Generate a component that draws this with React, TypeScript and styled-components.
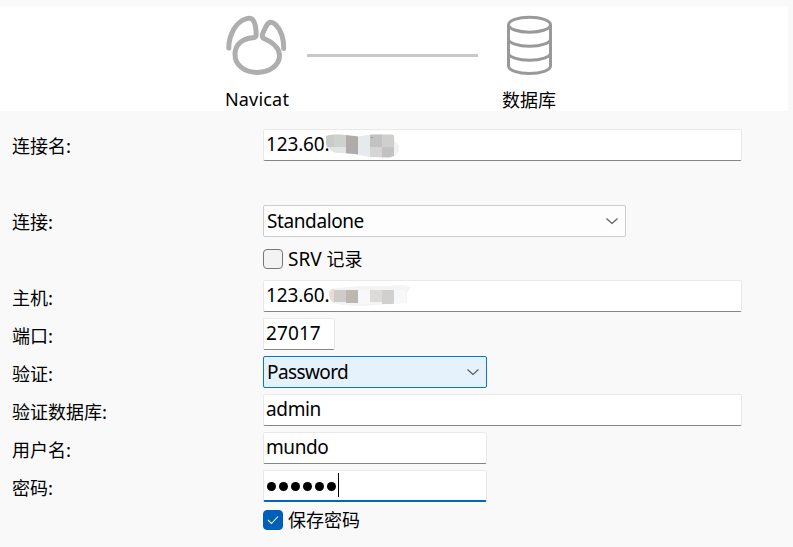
import React from "react";
import styled, { createGlobalStyle } from "styled-components";

const GlobalStyle = createGlobalStyle`
  * { box-sizing: border-box; }
  body {
    margin: 0;
    background: #f9f9f9;
    color: #000;
    font-family: "Noto Sans", "Noto Sans CJK SC", sans-serif;
    font-size: 19px;
  }
`;

const Window = styled.main`
  height: 547px;
  padding-top: 6px;
  overflow: hidden;
`;

const Header = styled.header`
  display: flex;
  width: 788px;
  height: 105px;
  padding: 9px 0 0 217px;
  background: #fff;
`;

const Endpoint = styled.div`
  display: flex;
  flex-direction: column;
  align-items: center;
  width: 80px;
`;

const Logo = styled.svg`
  flex: none;
  width: 80px;
  height: 60px;
`;

const Wire = styled.div`
  width: 171px;
  height: 3px;
  margin: 39px 11px 0 10px;
  background: #c8c8c8;
`;

const Caption = styled.span<{ $cjk?: boolean }>`
  margin-top: 11px;
  font-family: ${(p) => (p.$cjk ? '"Noto Sans CJK SC"' : '"Noto Sans"')}, sans-serif;
  font-size: 18px;
  line-height: 26px;
  letter-spacing: ${(p) => (p.$cjk ? 0 : 0.2)}px;
`;

const Form = styled.form`
  padding: 18px 0 0 12px;
`;

const Row = styled.div<{ $height?: number }>`
  display: flex;
  align-items: flex-start;
  height: ${(p) => p.$height ?? 38}px;
`;

const Label = styled.label<{ $line?: number }>`
  width: 251px;
  flex: none;
  font-family: "Noto Sans CJK SC", sans-serif;
  font-size: 18px;
  line-height: ${(p) => p.$line ?? 34}px;
`;

const Field = styled.div<{ $width: number; $focused?: boolean }>`
  display: flex;
  align-items: center;
  width: ${(p) => p.$width}px;
  height: 32px;
  padding: 0 2px 2px;
  background: #fff;
  border: 1px solid #e9e9e9;
  border-bottom: ${(p) => (p.$focused ? "2px solid #0067c0" : "1px solid #868686")};
  border-radius: 2px;
  line-height: 28px;
`;

const Text = styled.span<{ $spacing?: number }>`
  letter-spacing: ${(p) => p.$spacing ?? 0}px;
  white-space: nowrap;
`;

const Select = styled.div<{ $width: number; $active?: boolean }>`
  display: flex;
  align-items: center;
  justify-content: space-between;
  width: ${(p) => p.$width}px;
  height: 32px;
  padding: 0 7px 0 3px;
  background: ${(p) => (p.$active ? "#e5f1fb" : "#fdfdfd")};
  border: 1px solid ${(p) => (p.$active ? "#0078d4" : "#cdcdcd")};
  border-radius: 2px;
  line-height: 28px;
`;

const Option = styled.div<{ $top: number }>`
  display: flex;
  align-items: center;
  gap: 5px;
  height: 20px;
  margin: ${(p) => p.$top}px 0 0 251px;
  font-size: 18px;
  line-height: 20px;
`;

const Latin = styled.span`
  font-size: 19px;
`;

const Box = styled.span<{ $checked?: boolean }>`
  display: grid;
  place-items: center;
  width: 20px;
  height: 20px;
  border: 1px solid ${(p) => (p.$checked ? "#005fb8" : "#767676")};
  border-radius: 4px;
  background: ${(p) => (p.$checked ? "#005fb8" : "#f3f3f3")};
`;

const Dots = styled.div`
  display: flex;
  gap: 3px;
  padding: 3px 0 0 1px;
`;

const Dot = styled.i`
  width: 9px;
  height: 9px;
  border-radius: 50%;
  background: #000;
`;

const Caret = styled.i`
  width: 1px;
  height: 24px;
  margin: 0 0 0 2px;
  background: #000;
`;

const Redaction = styled.svg<{ $shift: number; $top?: number }>`
  flex: none;
  margin: ${(p) => p.$top ?? 2}px 0 0 ${(p) => p.$shift}px;
`;

function NavicatLogo() {
  return (
    <Logo viewBox="217 15 80 60" fill="none" stroke="#aeaeae" strokeWidth="5" strokeLinecap="round" strokeLinejoin="round">
      <path d="M228.800 48C228.800 35 235.500 22.500 245.500 19C252.500 16.700 255.700 20 256.200 34Q256.400 37.500 253 37.700C241 38.500 235 45.500 235 54.500C235 65 244.500 72.400 257 72.400C270 72.400 279.500 65 279.500 55.500C279.500 48 272 42 264.500 38.800Q261.600 37.500 262.500 34L266 26.500Q270 18.700 276 25C281.800 31 283.700 39 283.700 48.500" />
    </Logo>
  );
}

function DatabaseLogo() {
  return (
    <Logo viewBox="489 15 80 60" fill="none" stroke="#999" strokeWidth="3">
      <ellipse cx="529.5" cy="24.700" rx="21" ry="7.500" />
      <path d="M508.500 25V66C508.500 70.200 518 73.500 529.500 73.500S550.500 70.200 550.500 66V25M508.500 39C508.500 43 518 46.300 529.500 46.300S550.500 43 550.500 39M508.500 53C508.500 57 518 60.300 529.500 60.300S550.500 57 550.500 53" />
    </Logo>
  );
}

function Chevron() {
  return (
    <svg width="12" height="8" viewBox="0 0 12 8" fill="none" stroke="#5c5c5c" strokeWidth="1.2">
      <path d="M.5 1.500L6 6.500L11.500 1.500" />
    </svg>
  );
}

function NameRedaction() {
  return (
    <Redaction $shift={-3} $top={4} width="76" height="26" viewBox="326 133 76 26">
      <defs>
        <clipPath id="nameShape">
          <path d="M326 136Q329 134 340 134.500L359 136.500L372 134.500H392Q395 135 395 141Q400 145 399 151Q397 156 389 157.500L370 157L355 154L335 152.500Q326 149 326 143Z" />
        </clipPath>
      </defs>
      <g clipPath="url(#nameShape)" shapeRendering="crispEdges">
        <path fill="#f2f2f2" d="M326 133h76v26h-76z" />
        <path fill="#c9cbcb" d="M326 133h8v14h-8z" />
        <path fill="#cdd2ce" d="M334 133h12v14h-12z" />
        <path fill="#e4e4e4" d="M326 147h20v12h-20z" />
        <path fill="#b0aaa8" d="M346 133h12v14h-12z" />
        <path fill="#adabad" d="M346 147h12v12h-12z" />
        <path fill="#e5eaed" d="M358 133h12v26h-12z" />
        <path fill="#c2c2c3" d="M370 133h12v14h-12zM382 147h12v12h-12z" />
        <path fill="#cfcfce" d="M382 133h12v14h-12z" />
        <path fill="#d5d5d5" d="M370 147h12v12h-12z" />
      </g>
      <path fill="#dc8b46" d="M371 137h2v1h-2z" />
    </Redaction>
  );
}

function HostRedaction() {
  return (
    <Redaction $shift={-1} width="84" height="24" viewBox="328 284 84 24">
      <defs>
        <clipPath id="hostShape">
          <path d="M329 293Q330 288 338 288L359 286L389 286Q404 284 411 287Q409 290 407 293V303L390 304L362 306Q343 306 334 303Q329 300 329 293Z" />
        </clipPath>
      </defs>
      <g clipPath="url(#hostShape)" shapeRendering="crispEdges">
        <path fill="#f4f4f4" d="M328 284h84v24h-84z" />
        <path fill="#e7ddd3" d="M328 284h6v20h-6z" />
        <path fill="#cdccca" d="M334 290h12v12h-12z" />
        <path fill="#bdb7b0" d="M346 290h12v13h-12z" />
        <path fill="#f6f8fa" d="M358 290h12v14h-12zM394 290h12v14h-12z" />
        <path fill="#dcdbd9" d="M370 290h12v12h-12z" />
        <path fill="#d1d0cf" d="M382 290h12v14h-12z" />
      </g>
    </Redaction>
  );
}

export default function App() {
  return (
    <>
      <GlobalStyle />
      <Window>
        <Header>
          <Endpoint>
            <NavicatLogo />
            <Caption>Navicat</Caption>
          </Endpoint>
          <Wire />
          <Endpoint>
            <DatabaseLogo />
            <Caption $cjk>数据库</Caption>
          </Endpoint>
        </Header>
        <Form>
          <Row $height={76}>
            <Label $line={32}>连接名:</Label>
            <Field $width={479}>
              <Text $spacing={-0.15}>123.60.</Text>
              <NameRedaction />
            </Field>
          </Row>
          <Row>
            <Label $line={32}>连接:</Label>
            <Select $width={363}>
              <Text $spacing={-0.4}>Standalone</Text>
              <Chevron />
            </Select>
          </Row>
          <Row $height={37}>
            <Option $top={6}>
              <Box />
              <Text>
                <Latin>SRV </Latin>记录
              </Text>
            </Option>
          </Row>
          <Row>
            <Label>主机:</Label>
            <Field $width={479}>
              <Text $spacing={-0.15}>123.60.</Text>
              <HostRedaction />
            </Field>
          </Row>
          <Row>
            <Label>端口:</Label>
            <Field $width={72}>
              <Text $spacing={0.1}>27017</Text>
            </Field>
          </Row>
          <Row>
            <Label>验证:</Label>
            <Select $width={224} $active>
              <Text $spacing={-0.6}>Password</Text>
              <Chevron />
            </Select>
          </Row>
          <Row>
            <Label>验证数据库:</Label>
            <Field $width={479}>
              <Text $spacing={-0.35}>admin</Text>
            </Field>
          </Row>
          <Row>
            <Label>用户名:</Label>
            <Field $width={224}>
              <Text $spacing={-0.4}>mundo</Text>
            </Field>
          </Row>
          <Row>
            <Label>密码:</Label>
            <Field $width={224} $focused>
              <Dots>
                {Array.from({ length: 6 }, (_, i) => (
                  <Dot key={i} />
                ))}
              </Dots>
              <Caret />
            </Field>
          </Row>
          <Row>
            <Option $top={2}>
              <Box $checked>
                <svg width="12" height="10" viewBox="0 0 12 10" fill="none" stroke="#fff" strokeWidth="1.1">
                  <path d="M1 5L4.500 8.500L11 1.500" />
                </svg>
              </Box>
              <Text>保存密码</Text>
            </Option>
          </Row>
        </Form>
      </Window>
    </>
  );
}
